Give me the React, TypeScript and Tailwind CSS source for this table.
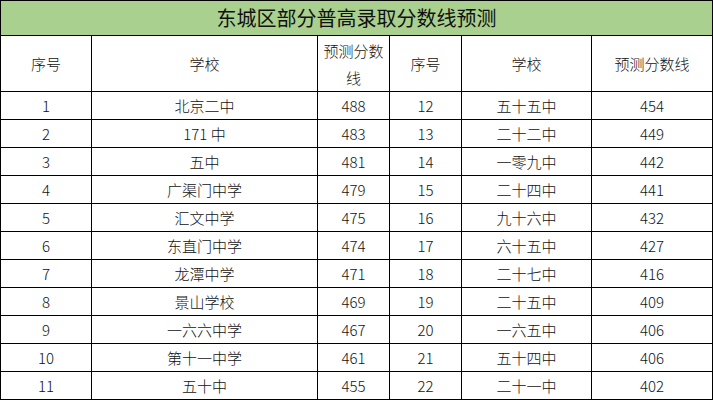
const rows: [string, string, string, string, string, string][] = [
  ["1", "北京二中", "488", "12", "五十五中", "454"],
  ["2", "171 中", "483", "13", "二十二中", "449"],
  ["3", "五中", "481", "14", "一零九中", "442"],
  ["4", "广渠门中学", "479", "15", "二十四中", "441"],
  ["5", "汇文中学", "475", "16", "九十六中", "432"],
  ["6", "东直门中学", "474", "17", "六十五中", "427"],
  ["7", "龙潭中学", "471", "18", "二十七中", "416"],
  ["8", "景山学校", "469", "19", "二十五中", "409"],
  ["9", "一六六中学", "467", "20", "一六五中", "406"],
  ["10", "第十一中学", "461", "21", "五十四中", "406"],
  ["11", "五十中", "455", "22", "二十一中", "402"],
];

const cell = "border border-black p-0 text-center align-middle";

export default function App() {
  return (
    <div className="h-[400px] w-[713px] bg-white font-['Noto_Sans_CJK_SC','Noto_Sans',sans-serif] text-[15px] font-light text-[#111]">
      <table className="w-[712px] table-fixed border-collapse">
        <colgroup>
          <col className="w-[91px]" />
          <col className="w-[226px]" />
          <col className="w-[72px]" />
          <col className="w-[72px]" />
          <col className="w-[130px]" />
          <col className="w-[121px]" />
        </colgroup>
        <tbody>
          <tr className="h-[35px]">
            <td colSpan={6} className={`${cell} bg-[#a9d08e] text-[20px] font-normal leading-none`}>
              东城区部分普高录取分数线预测
            </td>
          </tr>
          <tr className="h-[56px]">
            <td className={`${cell} leading-none`}>序号</td>
            <td className={`${cell} leading-none`}>学校</td>
            <td className={`${cell} leading-[27px]`}>
              预测分数
              <br />
              线
            </td>
            <td className={`${cell} leading-none`}>序号</td>
            <td className={`${cell} leading-none`}>学校</td>
            <td className={`${cell} leading-none`}>预测分数线</td>
          </tr>
          {rows.map((r) => (
            <tr key={r[0]} className="h-[28px]">
              {r.map((v, i) => (
                <td key={i} className={`${cell} leading-none`}>
                  {v}
                </td>
              ))}
            </tr>
          ))}
        </tbody>
      </table>
    </div>
  );
}
